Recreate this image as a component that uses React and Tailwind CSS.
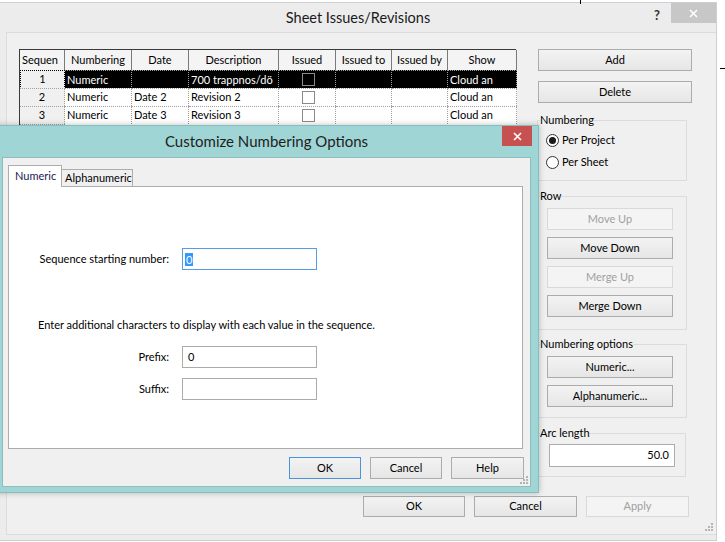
const cols = "grid grid-cols-[45px_67px_57px_90px_57px_56px_56px_69px]";

const rows = [
  { n: "1", num: "Numeric", date: "", desc: "700 trappnos/dö", show: "Cloud an", sel: true },
  { n: "2", num: "Numeric", date: "Date 2", desc: "Revision 2", show: "Cloud an" },
  { n: "3", num: "Numeric", date: "Date 3", desc: "Revision 3", show: "Cloud an" },
];

function Btn({ children, className = "", disabled, primary }) {
  const tone = disabled
    ? "border-[#d9d9d9] bg-[#f4f4f4] text-[#a0a0a0]"
    : primary
      ? "border-[#4a93de] bg-linear-to-b from-[#f3f3f3] to-[#e6e6e6] text-black"
      : "border-[#acacac] bg-linear-to-b from-[#f3f3f3] to-[#e6e6e6] text-black";
  return (
    <button type="button" className={`flex items-center justify-center border ${tone} ${className}`}>
      {children}
    </button>
  );
}

function Grip() {
  const dots = [[6, 0], [3, 3], [6, 3], [0, 6], [3, 6], [6, 6]];
  return (
    <svg width="9" height="9" viewBox="0 0 9 9">
      {dots.map(([x, y]) => (
        <rect key={`${x}-${y}`} x={x} y={y} width="2" height="2" fill="#b4b4b4" />
      ))}
    </svg>
  );
}

// group box with the caption cut into the top border
function Group({ label, className = "", inner = "", children }) {
  return (
    <fieldset className={`border border-[#dcdcdc] p-0 ${className}`}>
      <legend className="ml-[2px] px-0 leading-[14px] text-black">{label}</legend>
      <div className={inner}>{children}</div>
    </fieldset>
  );
}

function Radio({ checked, label }) {
  return (
    <div className="flex h-[18px] items-center gap-[3px]">
      <span className="flex h-[13px] w-[13px] items-center justify-center rounded-full border border-[#333] bg-white">
        {checked && <span className="h-[7px] w-[7px] rounded-full bg-[#1a1a1a]" />}
      </span>
      <span>{label}</span>
    </div>
  );
}

function RevisionTable() {
  const head = ["Sequen", "Numbering", "Date", "Description", "Issued", "Issued to", "Issued by", "Show"];
  return (
    <div className="h-[420px] w-[497px] border-l border-t border-[#3a3a3a] bg-white">
      <div className={`${cols} h-[20px] bg-[#f4f4f4]`}>
        {head.map((h, i) => (
          <div
            key={h}
            className={`flex items-center overflow-hidden whitespace-nowrap border-r border-[#7a7a7a] ${
              i === 0 ? "pl-[2px]" : "justify-center"
            }`}
          >
            {h}
          </div>
        ))}
      </div>
      {rows.map((r) => {
        const cell = `flex items-center overflow-hidden whitespace-nowrap pl-[2px] border-r border-t border-dotted ${
          r.sel ? "bg-black text-white border-[#9a9a9a]" : "bg-white text-black border-[#a0a0a0]"
        }`;
        return (
          <div key={r.n} className={`${cols} h-[18px]`}>
            <div
              className={`flex items-center justify-center bg-[#f0f0f0] border border-dotted ${
                r.sel ? "border-black" : "border-[#a0a0a0] border-l-0 border-b-0"
              }`}
            >
              {r.n}
            </div>
            <div className={cell}>{r.num}</div>
            <div className={cell}>{r.date}</div>
            <div className={cell}>{r.desc}</div>
            <div className={`${cell} justify-center pl-0`}>
              <span className="h-[13px] w-[13px] border border-[#8a8a8a]" />
            </div>
            <div className={cell}></div>
            <div className={cell}></div>
            <div className={cell}>{r.show}</div>
          </div>
        );
      })}
      <div className={`${cols} h-[18px]`}>
        <div className="border-r border-t border-dotted border-[#a0a0a0] bg-[#f0f0f0]" />
      </div>
    </div>
  );
}

function NumberingDialog() {
  return (
    <div className="absolute left-[-6px] top-[125px] flex h-[368px] w-[545px] flex-col border border-[#86bdbd] bg-[#a0d5d5] shadow-[0_0_6px_rgba(0,0,0,0.25)]">
      <div className="relative flex h-[31px] items-center justify-center">
        <span className="text-[15px] text-[#1e1e1e]">Customize Numbering Options</span>
        <button
          type="button"
          className="absolute right-[6px] top-0 flex h-[20px] w-[30px] items-center justify-center bg-[#c75050] text-white"
        >
          <svg width="9" height="9" viewBox="0 0 9 9">
            <path d="M1 1 L8 8 M8 1 L1 8" stroke="white" strokeWidth="1.6" />
          </svg>
        </button>
      </div>
      <div className="relative mx-[7px] mb-[5px] flex flex-1 flex-col border border-[#8fbcbc] bg-[#f0f0f0] pl-[5px] pr-[7px] pt-[7px]">
        <div className="flex h-[21px] items-end">
          <div className="relative z-10 -mb-px flex h-[22px] w-[54px] items-center border-l border-r border-t border-[#adadad] bg-white pl-[6px] text-[#1a1a50]">
            Numeric
          </div>
          <div className="flex h-[17px] w-[71px] items-center whitespace-nowrap border-r border-t border-[#adadad] bg-[#f0f0f0] pl-[3px]">
            Alphanumeric
          </div>
        </div>
        <div className="flex h-[263px] flex-col border border-[#adadad] bg-white">
          <div className="mt-[61px] flex items-center gap-[13px]">
            <span className="w-[160px] text-right">Sequence starting number:</span>
            <div className="flex h-[22px] w-[135px] items-center border border-[#569de5] pl-[2px]">
              <span className="bg-[#3399ff] px-[1px] leading-[13px] text-white">0</span>
            </div>
          </div>
          <div className="mt-[48px] pl-[29px] leading-[14px]">
            Enter additional characters to display with each value in the sequence.
          </div>
          <div className="mt-[14px] flex items-center gap-[13px]">
            <span className="w-[160px] text-right">Prefix:</span>
            <div className="flex h-[22px] w-[135px] items-center border border-[#ababab] pl-[5px]">0</div>
          </div>
          <div className="mt-[10px] flex items-center gap-[13px]">
            <span className="w-[160px] text-right">Suffix:</span>
            <div className="h-[22px] w-[135px] border border-[#ababab]" />
          </div>
        </div>
        <div className="-mr-[1px] mt-[8px] flex justify-end gap-[9px]">
          <Btn primary className="h-[22px] w-[72px]">OK</Btn>
          <Btn className="h-[22px] w-[72px]">Cancel</Btn>
          <Btn className="h-[22px] w-[73px]">Help</Btn>
        </div>
        <div className="absolute bottom-[1px] right-[1px]">
          <Grip />
        </div>
      </div>
    </div>
  );
}

export default function App() {
  return (
    <div className="relative h-[542px] w-[725px] overflow-hidden bg-white font-['Lato',sans-serif] text-[11px] text-black">
      <span className="absolute left-[580px] top-0 h-[4px] w-px bg-black" />
      <span className="absolute left-[720px] top-[68px] h-px w-[5px] bg-black" />

      <div className="mt-[2px] flex h-[539px] w-[717px] flex-col border-b border-r border-t border-[#cfcfcf] bg-[#ececec]">
        {/* Title bar */}
        <div className="relative flex h-[29px] shrink-0 items-center justify-center">
          <span className="text-[14.5px] text-[#1a1a1a]">Sheet Issues/Revisions</span>
          <span className="absolute right-[56px] top-[3px] text-[13px] font-bold text-[#333]">?</span>
          <button
            type="button"
            className="absolute right-0 top-0 flex h-[20px] w-[45px] items-center justify-center bg-[#c7c7c7]"
          >
            <svg width="9" height="9" viewBox="0 0 9 9">
              <path d="M1 1 L8 8 M8 1 L1 8" stroke="white" strokeWidth="1.5" />
            </svg>
          </button>
        </div>

        {/* Content panel */}
        <div className="relative mb-[5px] ml-[6px] flex flex-1 flex-col border-b border-l border-t border-[#dcdcdc] bg-[#f0f0f0] pl-[12px] pt-[16px]">
          <div className="flex">
            <RevisionTable />

            <div className="ml-[21px] flex w-[155px] flex-col">
              <Btn className="ml-[1px] h-[22px] w-[154px]">Add</Btn>
              <Btn className="ml-[1px] mt-[10px] h-[22px] w-[154px]">Delete</Btn>

              <Group label="Numbering" className="mt-[10px] h-[68px] w-[150px]" inner="flex flex-col gap-[4px] pl-[8px] pt-[4px]">
                <Radio checked label="Per Project" />
                <Radio label="Per Sheet" />
              </Group>

              <Group label="Row" className="mt-[8px] h-[141px] w-[150px]" inner="flex flex-col gap-[7px] pl-[9px] pt-[5px]">
                <Btn disabled className="h-[22px] w-[126px]">Move Up</Btn>
                <Btn className="h-[22px] w-[126px]">Move Down</Btn>
                <Btn disabled className="h-[22px] w-[126px]">Merge Up</Btn>
                <Btn className="h-[22px] w-[126px]">Merge Down</Btn>
              </Group>

              <Group label="Numbering options" className="mt-[7px] h-[81px] w-[150px]" inner="flex flex-col gap-[7px] pl-[9px] pt-[5px]">
                <Btn className="h-[22px] w-[126px]">Numeric...</Btn>
                <Btn className="h-[22px] w-[126px]">Alphanumeric...</Btn>
              </Group>

              <Group label="Arc length" className="mt-[8px] h-[51px] w-[149px]" inner="pl-[11px] pt-[4px]">
                <div className="flex h-[23px] w-[126px] items-center justify-end border border-[#acacac] bg-white pr-[5px]">
                  50.0
                </div>
              </Group>
            </div>
          </div>

          <div className="mt-auto flex justify-end gap-[9px] pb-[17px] pr-[27px]">
            <Btn className="h-[21px] w-[102px]">OK</Btn>
            <Btn className="h-[21px] w-[103px]">Cancel</Btn>
            <Btn disabled className="h-[21px] w-[103px]">Apply</Btn>
          </div>

          <div className="absolute bottom-[2px] right-[2px]">
            <Grip />
          </div>
        </div>
      </div>

      <NumberingDialog />
    </div>
  );
}
